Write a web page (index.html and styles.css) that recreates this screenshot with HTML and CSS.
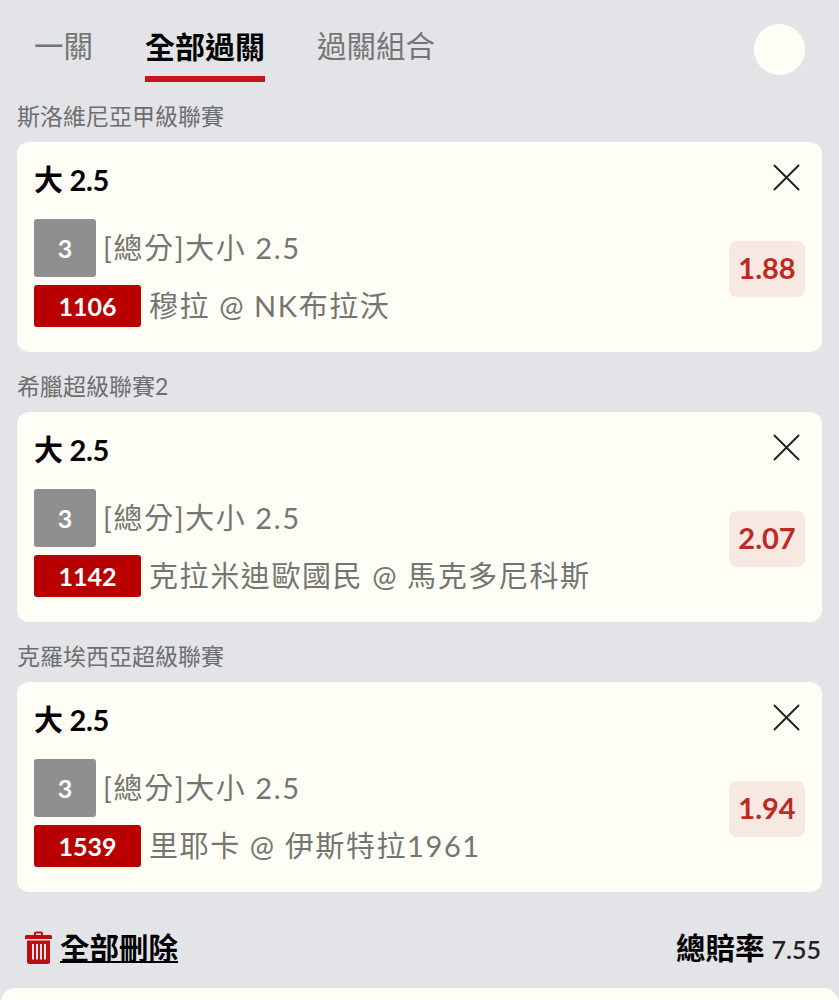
FILE: index.html
```html
<!DOCTYPE html>
<html lang="zh-Hant">
<head>
    <meta charset="UTF-8">
    <meta name="viewport" content="width=device-width, initial-scale=1.0">
    <title>過關</title>
    <link rel="stylesheet" href="styles.css">
</head>
<body>
    <div class="tabs">
        <a class="tab">一關</a>
        <a class="tab active">全部過關</a>
        <a class="tab">過關組合</a>
        <span class="round-btn"></span>
    </div>

    <div class="league">斯洛維尼亞甲級聯賽</div>
    <div class="card">
        <div class="card-top">
            <div class="pick">大 2.5</div>
            <svg class="close" viewBox="0 0 28 28"><path d="M1.500 1.500L26.500 26.500M26.500 1.500L1.500 26.500"/></svg>
        </div>
        <div class="card-body">
            <div class="info">
                <div class="row row-market"><span class="num">3</span><span class="text">[總分]大小 2.5</span></div>
                <div class="row"><span class="code">1106</span><span class="text">穆拉 @ NK布拉沃</span></div>
            </div>
            <div class="odds">1.88</div>
        </div>
    </div>

    <div class="league">希臘超級聯賽2</div>
    <div class="card">
        <div class="card-top">
            <div class="pick">大 2.5</div>
            <svg class="close" viewBox="0 0 28 28"><path d="M1.500 1.500L26.500 26.500M26.500 1.500L1.500 26.500"/></svg>
        </div>
        <div class="card-body">
            <div class="info">
                <div class="row row-market"><span class="num">3</span><span class="text">[總分]大小 2.5</span></div>
                <div class="row"><span class="code">1142</span><span class="text">克拉米迪歐國民 @ 馬克多尼科斯</span></div>
            </div>
            <div class="odds">2.07</div>
        </div>
    </div>

    <div class="league">克羅埃西亞超級聯賽</div>
    <div class="card">
        <div class="card-top">
            <div class="pick">大 2.5</div>
            <svg class="close" viewBox="0 0 28 28"><path d="M1.500 1.500L26.500 26.500M26.500 1.500L1.500 26.500"/></svg>
        </div>
        <div class="card-body">
            <div class="info">
                <div class="row row-market"><span class="num">3</span><span class="text">[總分]大小 2.5</span></div>
                <div class="row"><span class="code">1539</span><span class="text">里耶卡 @ 伊斯特拉1961</span></div>
            </div>
            <div class="odds">1.94</div>
        </div>
    </div>

    <div class="footer">
        <a class="clear-all">
            <svg class="trash" viewBox="0 0 27 33">
                <path d="M9 4V2.500C9 1.400 9.900.5 11 .5h5c1.100 0 2 .9 2 2V4h7.500c.8 0 1.500.7 1.500 1.500V8H0V5.500C0 4.700.7 4 1.500 4zM11 2.500V4h5V2.500z" fill-rule="evenodd"/>
                <path d="M2 9.500h23V31c0 1.100-.9 2-2 2H4c-1.100 0-2-.9-2-2zM7 13v15.500h2V13zM11 13v15.500h2V13zM15 13v15.500h2V13zM19 13v15.500h2V13z" fill-rule="evenodd"/>
            </svg>
            <span class="clear-text">全部刪除</span>
        </a>
        <div class="total">總賠率 <span class="total-num">7.55</span></div>
    </div>

    <div class="sheet"></div>
</body>
</html>
```
FILE: styles.css
```css
html, body {
    margin: 0;
    height: 1000px;
    overflow: hidden;
}

body {
    background-color: #e2e4e7;
    font-family: Lato, "Noto Sans CJK TC", sans-serif;
    color: #000;
}

.tabs {
    display: flex;
    align-items: flex-start;
    height: 82px;
    padding: 0 34px 0 34px;
}

.tab {
    font-size: 29.500px;
    line-height: 36px;
    padding-top: 28px;
    height: 54px;
    color: #757575;
    margin-right: 52px;
}

.tab.active {
    font-size: 30px;
    color: #000;
    font-weight: 700;
    border-bottom: 6px solid #c4141c;
    height: 48px;
}

.round-btn {
    width: 51px;
    height: 51px;
    margin-top: 24px;
    margin-left: auto;
    border-radius: 50%;
    background-color: #fffef6;
}

.league {
    height: 60px;
    padding: 19px 0 0 17px;
    box-sizing: border-box;
    font-size: 23px;
    line-height: 30px;
    color: #6e6e6e;
}

.card {
    margin: 0 17px;
    height: 210px;
    box-sizing: border-box;
    padding: 19px 17px 0 17px;
    background-color: #fffef6;
    border-radius: 12px;
}

.card-top {
    display: flex;
    justify-content: space-between;
    align-items: flex-start;
    height: 58px;
}

.pick {
    font-size: 29px;
    line-height: 38px;
    font-weight: 700;
    letter-spacing: -0.3px;
}

.close {
    width: 27px;
    height: 27px;
    margin: 3px 5px 0 0;
    fill: none;
    stroke: #222;
    stroke-width: 2;
    stroke-linecap: round;
}

.card-body {
    display: flex;
    justify-content: space-between;
    align-items: center;
}

.info {
    display: flex;
    flex-direction: column;
    gap: 8px;
}

.row {
    display: flex;
    align-items: center;
    height: 42px;
}

.row-market {
    height: 58px;
}

.num {
    width: 62px;
    height: 58px;
    display: flex;
    align-items: center;
    justify-content: center;
    background-color: #8f8f8f;
    border-radius: 3px;
    color: #fff;
    font-size: 25px;
    font-weight: 700;
    margin-right: 7px;
}

.code {
    width: 107px;
    height: 42px;
    display: flex;
    align-items: center;
    justify-content: center;
    background-color: #b80000;
    border-radius: 3px;
    color: #fff;
    font-size: 25px;
    font-weight: 700;
    margin-right: 8px;
}

.text {
    font-size: 29px;
    line-height: 40px;
    letter-spacing: 1.600px;
    color: #75756f;
}

.odds {
    width: 76px;
    height: 56px;
    box-sizing: border-box;
    padding-bottom: 3px;
    margin-bottom: 8px;
    display: flex;
    align-items: center;
    justify-content: center;
    background-color: #f7e8e2;
    border-radius: 8px;
    color: #bd2a24;
    font-size: 29px;
    font-weight: 700;
}

.footer {
    display: flex;
    justify-content: space-between;
    align-items: center;
    height: 96px;
    box-sizing: border-box;
    padding: 14px 18px 0 25px;
}

.clear-all {
    display: flex;
    align-items: center;
    gap: 8px;
    font-size: 29.500px;
    font-weight: 700;
}

.clear-text {
    padding-bottom: 2px;
    text-decoration: underline;
}

.trash {
    width: 27px;
    height: 33px;
    fill: #bb0f14;
}

.total {
    font-size: 29.500px;
    font-weight: 700;
    padding-bottom: 2px;
}

.total-num {
    font-size: 25px;
    font-weight: 600;
    color: #222;
}

.sheet {
    height: 40px;
    background-color: #fffef6;
    border-radius: 16px 16px 0 0;
}
```
